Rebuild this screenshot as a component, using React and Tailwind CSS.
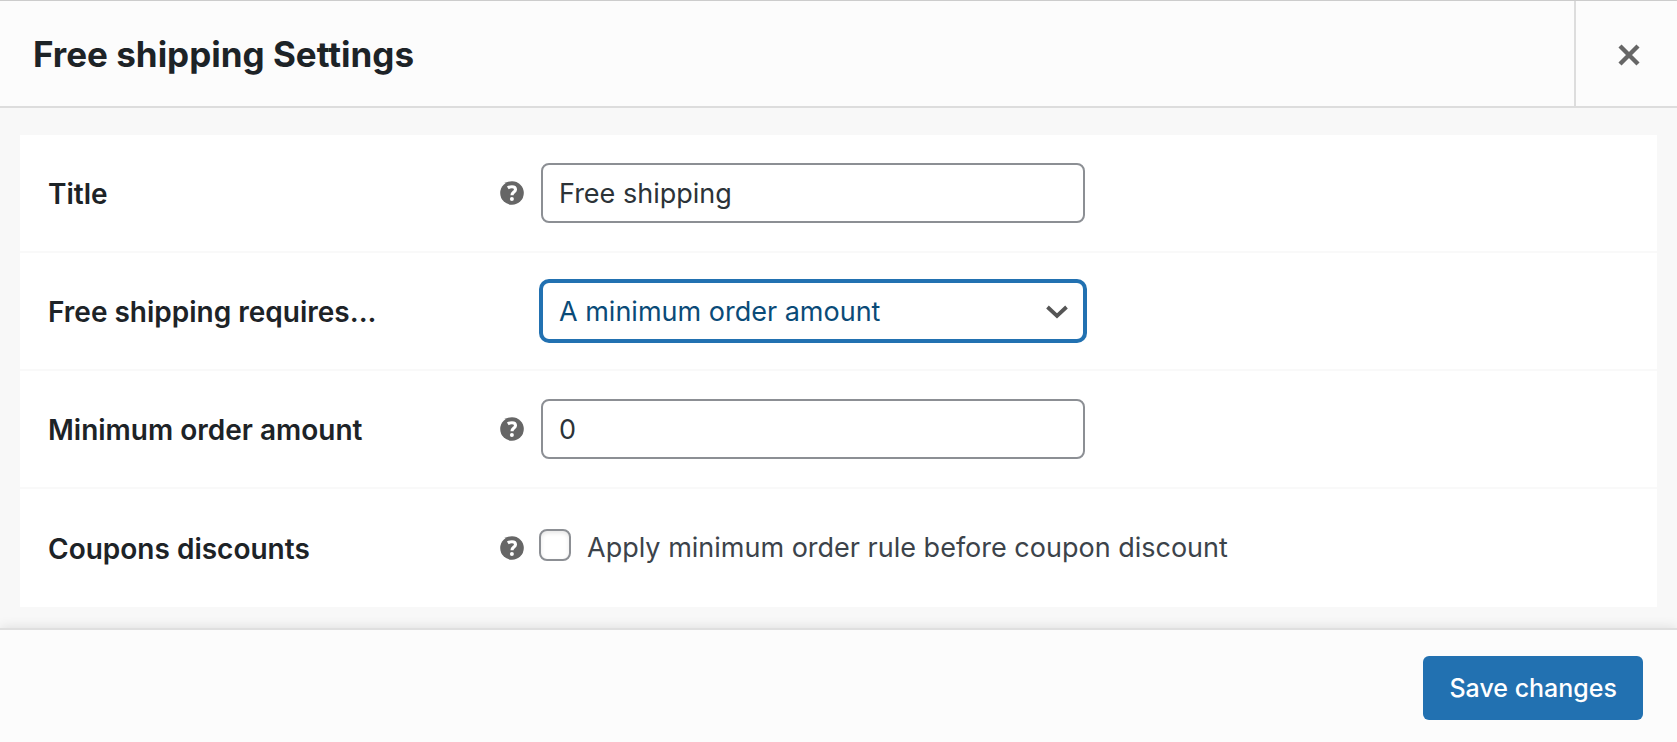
import { useState } from 'react';

function HelpTip({ text }) {
  return (
    <button type="button" title={text} aria-label={text} className="block size-6 shrink-0 text-[#666666]">
      <svg viewBox="0 0 24 24" className="size-6" aria-hidden="true">
        <circle cx="12" cy="12" r="11.8" fill="currentColor" />
        <path
          d="M7.8 6.9c1.2-.8 2.6-1.2 4.1-1.2 2.4 0 3.6 1 3.6 2.7 0 2.7-3.5 2.6-3.5 5.8"
          fill="none"
          stroke="#fff"
          strokeWidth="3.1"
        />
        <circle cx="11.9" cy="18" r="2" fill="#fff" />
      </svg>
    </button>
  );
}

function SettingRow({ label, htmlFor, tip, children }) {
  return (
    <div className="flex min-h-[118px] items-center border-b-2 border-[#f9f9f9] pl-7 last:border-b-0">
      <div className="flex w-[476px] shrink-0 items-center justify-between">
        <label htmlFor={htmlFor} className="pt-0.5 text-[28px] leading-9 font-semibold text-[#1d2327]">
          {label}
        </label>
        {tip && <HelpTip text={tip} />}
      </div>
      {children}
    </div>
  );
}

const fieldClass =
  'ml-[17px] h-[60px] w-[544px] rounded-lg border-2 border-[#8c8f94] bg-white px-4 text-[27px] text-[#2c3338] outline-none';

export default function App() {
  const [title, setTitle] = useState('Free shipping');
  const [requires, setRequires] = useState('min_amount');
  const [amount, setAmount] = useState('0');
  const [ignoreDiscounts, setIgnoreDiscounts] = useState(false);

  return (
    <div className="flex min-h-screen flex-col bg-[#f8f8f8] font-['Inter',sans-serif]">
      <header className="flex h-[108px] border-t border-b-2 border-t-[#cccccc] border-b-[#dddddd] bg-[#fcfcfc]">
        <h1 className="flex-1 pt-[31px] pl-[33px] text-[35px] leading-[44px] font-bold text-[#1d2327]">
          Free shipping Settings
        </h1>
        <button
          type="button"
          aria-label="Close modal panel"
          className="flex w-[103px] items-center justify-center border-l-2 border-[#dddddd] pt-0.5 pl-1 text-[#666666]"
        >
          <svg viewBox="0 0 22 22" className="size-[22px]" aria-hidden="true">
            <path d="M2 2l18 18M20 2L2 20" stroke="currentColor" strokeWidth="4.4" />
          </svg>
        </button>
      </header>

      <main className="flex-1 px-5 pt-[27px] pb-5">
        <div className="bg-white">
          <SettingRow label="Title" htmlFor="title" tip="This controls the title which the user sees during checkout.">
            <input
              id="title"
              type="text"
              className={fieldClass}
              value={title}
              onChange={(e) => setTitle(e.target.value)}
            />
          </SettingRow>

          <SettingRow label="Free shipping requires..." htmlFor="requires">
            <div className="relative ml-[17px]">
              <select
                id="requires"
                className="h-[60px] w-[544px] appearance-none rounded-lg border-2 border-[#2271b1] bg-white px-4 pt-0.5 text-[27px] text-[#0a4b78] ring-2 ring-[#2271b1] outline-none"
                value={requires}
                onChange={(e) => setRequires(e.target.value)}
              >
                <option value="min_amount">A minimum order amount</option>
              </select>
              <svg
                viewBox="0 0 22 14"
                className="pointer-events-none absolute top-6 right-[17px] h-[14px] w-[22px]"
                aria-hidden="true"
              >
                <path d="M1.5 2l9.5 9 9.5-9" fill="none" stroke="#555555" strokeWidth="3.8" />
              </svg>
            </div>
          </SettingRow>

          <SettingRow
            label="Minimum order amount"
            htmlFor="amount"
            tip="Users will need to spend this amount to get free shipping."
          >
            <input
              id="amount"
              type="text"
              className={fieldClass}
              value={amount}
              onChange={(e) => setAmount(e.target.value)}
            />
          </SettingRow>

          <SettingRow
            label="Coupons discounts"
            htmlFor="discounts"
            tip="Free shipping would be available based on pre-discount order amount."
          >
            <label className="ml-[15px] flex items-center gap-4 text-[27px] leading-9 text-[#3c434a]">
              <input
                id="discounts"
                type="checkbox"
                className="mb-1.5 size-8 appearance-none rounded-lg border-2 border-[#8c8f94] bg-white shadow-[inset_0_2px_4px_rgba(0,0,0,0.1)] checked:bg-[#2271b1]"
                checked={ignoreDiscounts}
                onChange={(e) => setIgnoreDiscounts(e.target.checked)}
              />
              Apply minimum order rule before coupon discount
            </label>
          </SettingRow>
        </div>
      </main>

      <footer className="flex justify-end border-t-2 border-[#dfdfdf] bg-[#fcfcfc] pt-[26px] pr-[34px] pb-[22px] shadow-[0_0_12px_rgba(0,0,0,0.12)]">
        <button
          type="button"
          className="h-16 rounded-md bg-[#2271b1] px-[26px] pt-0.5 text-[25px] font-medium text-white hover:bg-[#135e96]"
        >
          Save changes
        </button>
      </footer>
    </div>
  );
}
